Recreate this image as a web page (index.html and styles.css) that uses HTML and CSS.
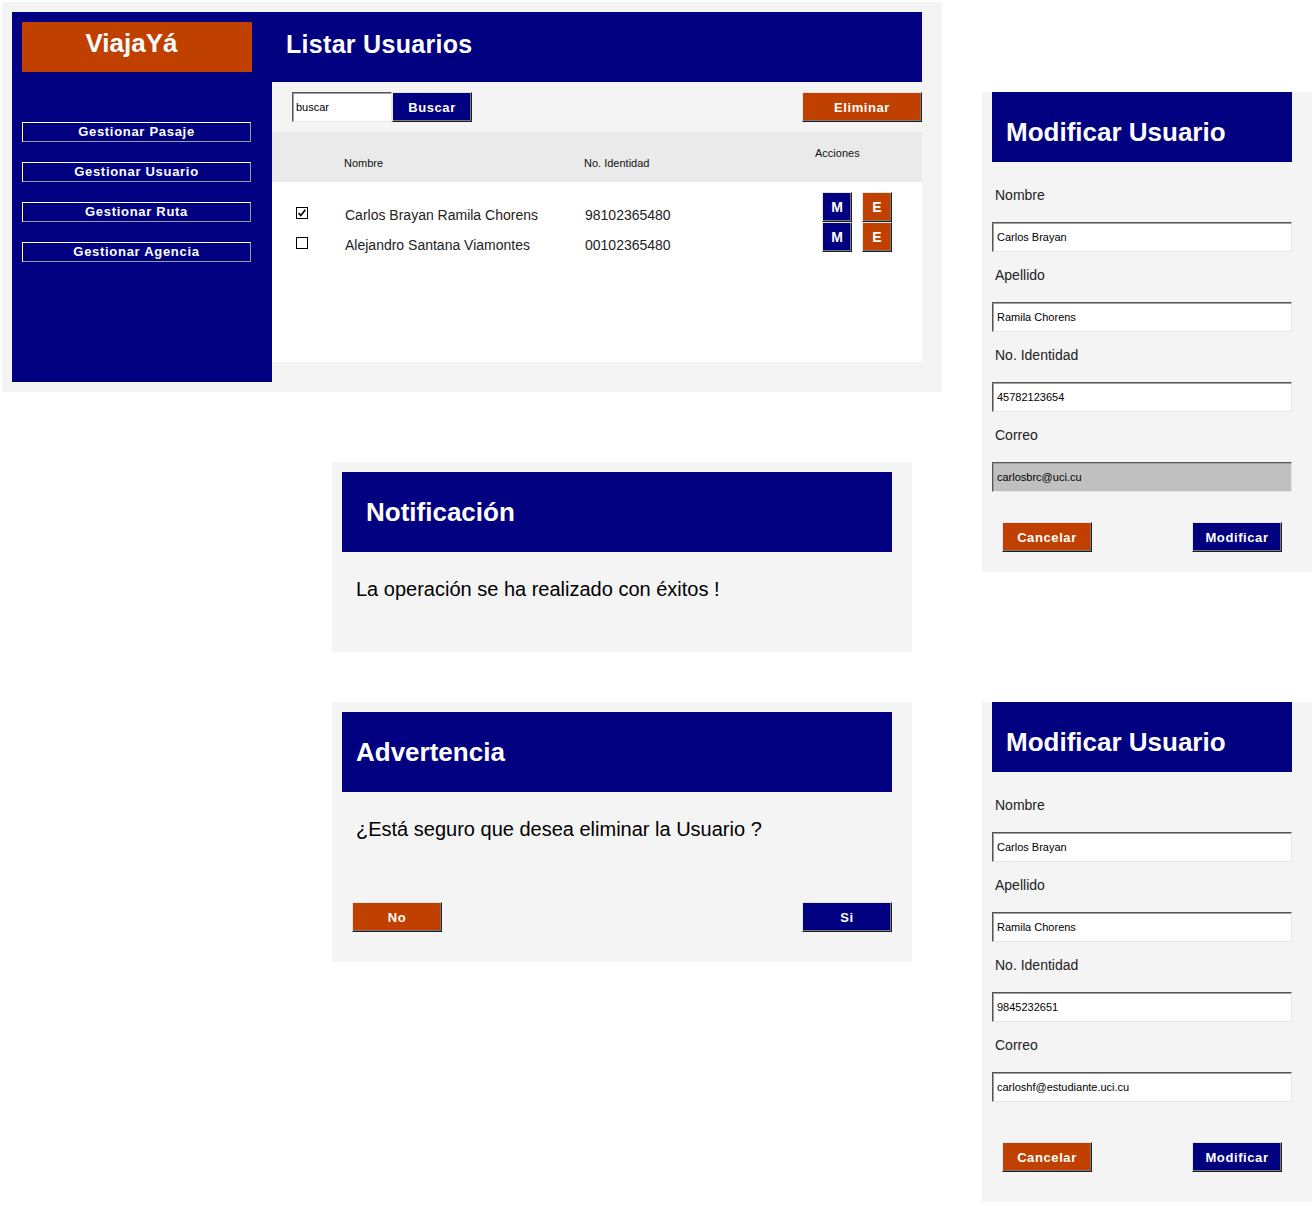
FILE: index.html
```html
<!DOCTYPE html>
<html lang="es">
<head>
<meta charset="utf-8">
<title>ViajaYá - Usuarios</title>
<link rel="stylesheet" href="styles.css">
</head>
<body>
<div class="canvas">
  <div class="col-left">
    <section class="screen list-screen">
      <aside class="sidebar">
        <div class="logo">ViajaYá</div>
        <nav class="menu">
          <a class="menu-btn">Gestionar Pasaje</a>
          <a class="menu-btn">Gestionar Usuario</a>
          <a class="menu-btn">Gestionar Ruta</a>
          <a class="menu-btn">Gestionar Agencia</a>
        </nav>
      </aside>
      <main class="main">
        <header class="main-header"><h1 class="main-title">Listar Usuarios</h1></header>
        <div class="toolbar">
          <input class="search-input" type="text" value="buscar">
          <button class="btn btn-navy btn-buscar">Buscar</button>
          <button class="btn btn-orange btn-eliminar">Eliminar</button>
        </div>
        <div class="thead">
          <div class="th th-check"></div>
          <div class="th">Nombre</div>
          <div class="th">No. Identidad</div>
          <div class="th th-actions">Acciones</div>
        </div>
        <div class="tbody">
          <div class="row">
            <div class="cell cell-check">
              <span class="check">
                <svg viewBox="0 0 12 12" width="10" height="10"><path d="M2 6.2 L4.6 9 L10 2.2" fill="none" stroke="#000" stroke-width="2"/></svg>
              </span>
            </div>
            <div class="cell">Carlos Brayan Ramila Chorens</div>
            <div class="cell">98102365480</div>
            <div class="cell cell-actions">
              <button class="btn btn-navy btn-sq">M</button>
              <button class="btn btn-orange btn-sq">E</button>
            </div>
          </div>
          <div class="row">
            <div class="cell cell-check"><span class="check"></span></div>
            <div class="cell">Alejandro Santana Viamontes</div>
            <div class="cell">00102365480</div>
            <div class="cell cell-actions">
              <button class="btn btn-navy btn-sq">M</button>
              <button class="btn btn-orange btn-sq">E</button>
            </div>
          </div>
        </div>
      </main>
    </section>

    <section class="screen dialog dialog-notif">
      <header class="dialog-header notif-header"><h2 class="dialog-title">Notificación</h2></header>
      <p class="dialog-msg">La operación se ha realizado con éxitos !</p>
    </section>

    <section class="screen dialog dialog-warn">
      <header class="dialog-header warn-header"><h2 class="dialog-title">Advertencia</h2></header>
      <p class="dialog-msg">¿Está seguro que desea eliminar la Usuario ?</p>
      <div class="dialog-actions">
        <button class="btn btn-orange btn-wide">No</button>
        <button class="btn btn-navy btn-wide">Si</button>
      </div>
    </section>
  </div>

  <div class="col-right">
    <section class="screen form-screen form-1">
      <header class="form-header"><h2 class="form-title">Modificar Usuario</h2></header>
      <div class="form-body">
        <label class="field-label">Nombre</label>
        <input class="field-input" type="text" value="Carlos Brayan">
        <label class="field-label">Apellido</label>
        <input class="field-input" type="text" value="Ramila Chorens">
        <label class="field-label">No. Identidad</label>
        <input class="field-input" type="text" value="45782123654">
        <label class="field-label">Correo</label>
        <input class="field-input field-disabled" type="text" value="carlosbrc@uci.cu" readonly>
        <div class="form-actions">
          <button class="btn btn-orange btn-wide">Cancelar</button>
          <button class="btn btn-navy btn-wide">Modificar</button>
        </div>
      </div>
    </section>

    <section class="screen form-screen form-2">
      <header class="form-header"><h2 class="form-title">Modificar Usuario</h2></header>
      <div class="form-body">
        <label class="field-label">Nombre</label>
        <input class="field-input" type="text" value="Carlos Brayan">
        <label class="field-label">Apellido</label>
        <input class="field-input" type="text" value="Ramila Chorens">
        <label class="field-label">No. Identidad</label>
        <input class="field-input" type="text" value="9845232651">
        <label class="field-label">Correo</label>
        <input class="field-input" type="text" value="carloshf@estudiante.uci.cu">
        <div class="form-actions">
          <button class="btn btn-orange btn-wide">Cancelar</button>
          <button class="btn btn-navy btn-wide">Modificar</button>
        </div>
      </div>
    </section>
  </div>
</div>
</body>
</html>
```

FILE: styles.css
```css
* { box-sizing: border-box; }

html, body {
  margin: 0;
  padding: 0;
  background: #ffffff;
  font-family: "Liberation Sans", Arial, Helvetica, sans-serif;
  color: #222;
}

h1, h2, p { margin: 0; }

.canvas {
  display: flex;
  align-items: flex-start;
  width: 1316px;
}

.col-left {
  width: 942px;
  padding: 2px 0 0 2px;
  display: flex;
  flex-direction: column;
}

.col-right {
  width: 330px;
  margin-left: 40px;
  display: flex;
  flex-direction: column;
}

.screen { background: #f4f4f4; }

/* ---------- List screen ---------- */
.list-screen {
  width: 940px;
  height: 390px;
  padding: 10px;
  display: flex;
  align-items: flex-start;
}

.sidebar {
  width: 260px;
  height: 370px;
  background: #000080;
  padding: 10px 20px 0 10px;
}

.logo {
  width: 230px;
  height: 50px;
  background: #c04000;
  color: #fff;
  font-weight: bold;
  font-size: 26px;
  line-height: 30px;
  padding: 6px 11px 0 0;
  text-align: center;
}

.menu {
  margin-top: 50px;
  display: flex;
  flex-direction: column;
  gap: 20px;
}

.menu-btn {
  display: block;
  width: 229px;
  height: 20px;
  border: 1px solid;
  border-color: #ffffff #9a9a9a #9a9a9a #ffffff;
  color: #fff;
  font-weight: bold;
  font-size: 13px;
  letter-spacing: 0.7px;
  line-height: 18px;
  text-align: center;
}

.main { width: 650px; }

.main-header {
  height: 70px;
  background: #000080;
  padding: 0 0 6px 14px;
  display: flex;
  align-items: center;
}

.main-title {
  color: #fff;
  font-size: 25px;
  letter-spacing: 0.3px;
  font-weight: bold;
}

.toolbar {
  height: 50px;
  background: #f4f4f4;
  padding: 10px 0 0 20px;
  display: flex;
  align-items: flex-start;
}

.search-input {
  width: 100px;
  height: 30px;
  margin: 0;
  padding: 0 3px;
  font-family: inherit;
  font-size: 11px;
  color: #000;
  background: #fff;
  border: 1px solid;
  border-color: #555 #e6e6e6 #e6e6e6 #555;
  box-shadow: inset 1px 1px 0 #a0a0a0;
  outline: none;
}

.btn {
  height: 30px;
  margin: 0;
  padding: 0;
  border: 1px solid;
  border-color: #e6e6e6 #1e1e1e #1e1e1e #e6e6e6;
  box-shadow: inset -1px -1px 0 #7a7a7a;
  color: #fff;
  font-family: inherit;
  font-weight: bold;
  font-size: 13px;
  letter-spacing: 0.6px;
  text-align: center;
  cursor: pointer;
}

.btn-navy { background: #000080; }
.btn-orange { background: #c04000; }

.btn-buscar { width: 80px; }
.btn-eliminar { width: 120px; margin-left: auto; }
.btn-wide { width: 90px; }

.btn-sq {
  width: 30px;
  font-size: 14px;
  letter-spacing: 0;
}

.thead {
  height: 50px;
  background: #eaeaea;
  display: grid;
  grid-template-columns: 72px 240px 230px 1fr;
  font-size: 11px;
  line-height: 13px;
  color: #111;
}

.th { padding-top: 25px; }
.th-actions { padding-top: 15px; padding-left: 1px; }

.tbody {
  height: 180px;
  background: #fff;
  padding-top: 10px;
}

.row {
  display: grid;
  grid-template-columns: 72px 240px 230px 1fr;
  height: 30px;
  align-items: end;
  font-size: 14px;
  line-height: 16px;
  color: #222;
}

.row .cell { padding-left: 1px; margin-bottom: -1px; }

.cell-check {
  padding-left: 24px !important;
  display: flex;
  align-items: flex-end;
  height: 30px;
  padding-bottom: 3px;
  margin-bottom: 0 !important;
}

.check {
  width: 12px;
  height: 12px;
  border: 1px solid #000;
  background: #fff;
  display: flex;
  align-items: center;
  justify-content: center;
}

.check svg { display: block; }

.cell-actions {
  height: 30px;
  padding-left: 8px !important;
  margin-bottom: 0 !important;
  display: flex;
  gap: 10px;
}

/* ---------- Dialogs ---------- */
.dialog {
  width: 580px;
  margin-left: 330px;
  padding: 10px 20px 10px 10px;
}

.dialog-notif { margin-top: 70px; height: 190px; }
.dialog-warn { margin-top: 50px; height: 260px; }

.dialog-header {
  height: 80px;
  background: #000080;
  display: flex;
  align-items: center;
}

.notif-header { padding-left: 24px; }
.warn-header { padding-left: 14px; }

.dialog-title {
  color: #fff;
  font-size: 26px;
  font-weight: bold;
}

.dialog-msg {
  margin-top: 25px;
  padding-left: 14px;
  font-size: 20px;
  line-height: 24px;
  color: #000;
}

.dialog-actions {
  margin-top: 61px;
  padding-left: 10px;
  display: flex;
  justify-content: space-between;
}

/* ---------- Forms ---------- */
.form-screen {
  width: 330px;
  padding-left: 10px;
}

.form-1 { margin-top: 92px; height: 480px; }
.form-2 { margin-top: 130px; height: 500px; }

.form-header {
  width: 300px;
  height: 70px;
  background: #000080;
  padding: 10px 0 0 14px;
  display: flex;
  align-items: center;
}

.form-title {
  color: #fff;
  font-size: 26px;
  font-weight: bold;
}

.form-body {
  display: flex;
  flex-direction: column;
  padding-top: 10px;
}

.field-label {
  margin-top: 15px;
  padding-left: 3px;
  font-size: 14px;
  line-height: 16px;
  color: #222;
}

.field-input {
  margin-top: 19px;
  width: 300px;
  height: 30px;
  padding: 0 4px;
  font-family: inherit;
  font-size: 11px;
  color: #000;
  background: #fff;
  border: 1px solid;
  border-color: #555 #e6e6e6 #e6e6e6 #555;
  box-shadow: inset 1px 1px 0 #a0a0a0;
  outline: none;
}

.field-disabled { background: #c0c0c0; }

.form-actions {
  margin-top: 30px;
  padding: 0 10px;
  width: 300px;
  display: flex;
  justify-content: space-between;
}

.form-2 .form-actions { margin-top: 40px; }
```
